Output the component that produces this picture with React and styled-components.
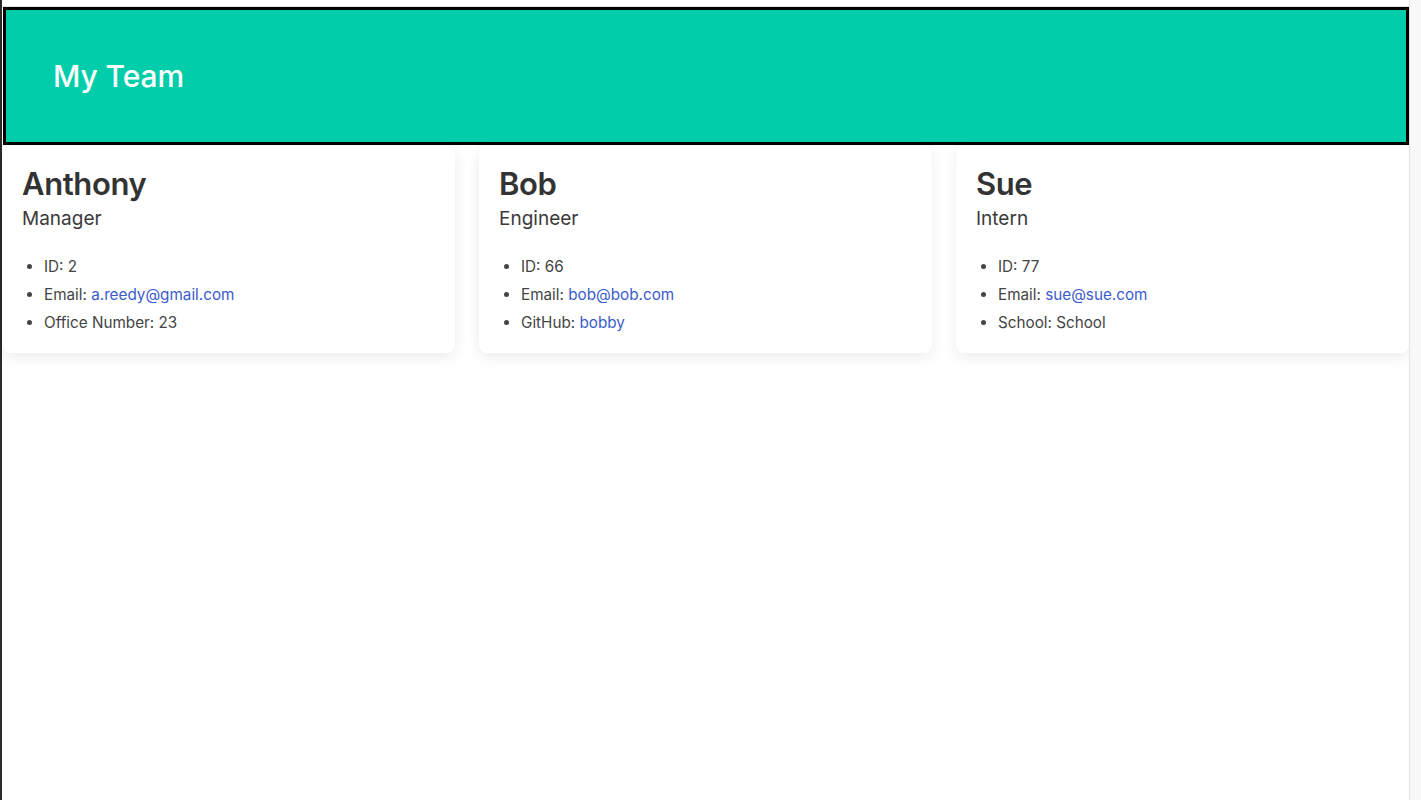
import React from "react";
import styled, { createGlobalStyle } from "styled-components";

const GlobalStyle = createGlobalStyle`
  html, body {
    margin: 0;
    padding: 0;
    background: #ffffff;
    font-family: Inter, "Noto Sans", "Liberation Sans", sans-serif;
  }
`;

const team = [
  {
    name: "Anthony",
    role: "Manager",
    id: 2,
    email: "a.reedy@gmail.com",
    extra: { label: "Office Number", value: "23" },
  },
  {
    name: "Bob",
    role: "Engineer",
    id: 66,
    email: "bob@bob.com",
    extra: { label: "GitHub", value: "bobby", link: true },
  },
  {
    name: "Sue",
    role: "Intern",
    id: 77,
    email: "sue@sue.com",
    extra: { label: "School", value: "School" },
  },
];

export default function App() {
  return (
    <>
      <GlobalStyle />
      <Window>
        <LeftEdge />
        <Main>
          <TopStrip />
          <Header>
            <Title>My Team</Title>
          </Header>
          <Cards>
            {team.map((member) => (
              <Card key={member.name}>
                <Name>{member.name}</Name>
                <Role>{member.role}</Role>
                <Details>
                  <li>ID: {member.id}</li>
                  <li>
                    Email: <Link href={`mailto:${member.email}`}>{member.email}</Link>
                  </li>
                  <li>
                    {member.extra.label}:{" "}
                    {member.extra.link ? (
                      <Link href="#">{member.extra.value}</Link>
                    ) : (
                      member.extra.value
                    )}
                  </li>
                </Details>
              </Card>
            ))}
          </Cards>
        </Main>
        <Scrollbar />
      </Window>
    </>
  );
}

const Window = styled.div`
  display: flex;
  height: 800px;
  overflow: hidden;
`;

const LeftEdge = styled.div`
  width: 2px;
  background: #2a2a2a;
`;

const Main = styled.div`
  flex: 1;
  display: flex;
  flex-direction: column;
`;

const TopStrip = styled.div`
  height: 6px;
  border-bottom: 1px solid #e6e6e6;
`;

const Header = styled.header`
  margin-left: 1px;
  height: 132px;
  background: #02cdaa;
  border: 3px solid #000;
  display: flex;
  align-items: center;
  padding-left: 47px;
`;

const Title = styled.h1`
  margin: 0;
  color: #fff;
  font-size: 30px;
  font-weight: 500;
  letter-spacing: -0.1px;
`;

const Cards = styled.div`
  display: grid;
  grid-template-columns: repeat(3, 1fr);
  gap: 24px;
  margin-top: 1px;
`;

const Card = styled.section`
  background: #fff;
  border-radius: 8px;
  box-shadow: 0 4px 14px rgba(0, 0, 0, 0.08);
  padding: 18px 20px 16px 20px;
  color: #333;
`;

const Name = styled.h2`
  margin: 0;
  font-size: 31px;
  font-weight: 600;
  line-height: 40px;
  letter-spacing: -0.4px;
`;

const Role = styled.div`
  margin-top: 1px;
  font-size: 19px;
  line-height: 28px;
  color: #3a3a3a;
`;

const Details = styled.ul`
  margin: 20px 0 0;
  padding-left: 22px;
  font-size: 15.25px;
  line-height: 28px;
  color: #444;
`;

const Link = styled.a`
  color: #3b5bcc;
  text-decoration: none;
`;

const Scrollbar = styled.div`
  width: 11px;
  background: #f8f8f8;
  border-left: 1px solid #e4e4e4;
`;
